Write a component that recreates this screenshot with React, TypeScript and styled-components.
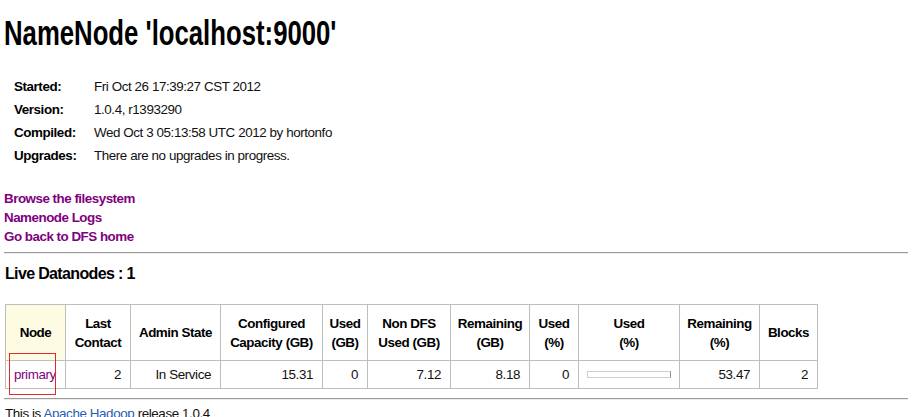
import React from "react";
import styled, { createGlobalStyle } from "styled-components";

const Global = createGlobalStyle`
  html, body { margin: 0; padding: 0; background: #fff; }
  body {
    font-family: "Liberation Sans", Arial, sans-serif;
    font-size: 13px;
    color: #111;
  }
`;

const Page = styled.div`
  width: 904px;
  padding: 0 0 0 4px;
`;

const Title = styled.h1`
  margin: 13px 0 0 0;
  font-size: 35px;
  line-height: 40px;
  font-weight: bold;
  color: #000;
  white-space: nowrap;
`;

const TitleText = styled.span`
  display: inline-block;
  transform: scaleX(0.735);
  transform-origin: left center;
`;

const InfoGrid = styled.div`
  margin: 22px 0 0 10px;
  display: grid;
  grid-template-columns: 80px auto;
  grid-auto-rows: 23px;
  align-items: center;
  font-size: 13.4px;
  letter-spacing: -0.42px;
  line-height: 15px;
`;

const InfoLabel = styled.div`
  font-weight: bold;
  color: #000;
`;

const InfoValue = styled.div`
  color: #111;
`;

const LinkList = styled.div`
  margin-top: 22px;
  display: flex;
  flex-direction: column;
`;

const NavLink = styled.a`
  display: block;
  font-weight: bold;
  font-size: 13.4px;
  line-height: 19px;
  color: #800080;
  text-decoration: none;
  letter-spacing: -0.5px;
`;

const Rule = styled.div<{ $top: number }>`
  margin-top: ${(p) => p.$top}px;
  border-top: 1px solid #9a9a9a;
  border-bottom: 1px solid #ececec;
`;

const Section = styled.h3`
  margin: 10px 0 0 1px;
  font-size: 16px;
  line-height: 19px;
  font-weight: bold;
  color: #000;
  letter-spacing: -0.65px;
`;

const Table = styled.table`
  margin: 21px 0 0 1px;
  border-collapse: collapse;
  table-layout: fixed;
  width: 812px;
  letter-spacing: -0.3px;
`;

const Th = styled.th<{ $sorted?: boolean }>`
  border: 1px solid #bdbdbd;
  height: 55px;
  padding: 0 5px;
  font-weight: bold;
  font-size: 13.4px;
  letter-spacing: -0.45px;
  text-align: center;
  line-height: 19px;
  color: #000;
  background: ${(p) => (p.$sorted ? "#fdfbe2" : "#fff")};
`;

const Td = styled.td<{ $align?: "left" | "right" | "center" }>`
  position: relative;
  border: 1px solid #bdbdbd;
  height: 27px;
  padding: 0 9px 0 8px;
  font-size: 13.4px;
  letter-spacing: -0.4px;
  text-align: ${(p) => p.$align ?? "right"};
  color: #111;
  line-height: 15px;
`;

const NodeLink = styled.a`
  color: #800080;
  text-decoration: none;
`;

const Annotation = styled.div`
  position: absolute;
  left: 3px;
  top: -8px;
  width: 45px;
  height: 40px;
  border: 1px solid #e3282c;
  pointer-events: none;
`;

const Bar = styled.div`
  width: 82px;
  height: 5px;
  border: 1px solid #cfcfcf;
  border-right-color: #8e8e8e;
  background: #fff;
`;

const Footer = styled.p`
  margin: 6px 0 0 1px;
  line-height: 15px;
  font-size: 13.4px;
  letter-spacing: -0.4px;
  color: #111;
`;

const FooterLink = styled.a`
  color: #2a5db0;
  text-decoration: none;
`;

const info: [string, string][] = [
  ["Started:", "Fri Oct 26 17:39:27 CST 2012"],
  ["Version:", "1.0.4, r1393290"],
  ["Compiled:", "Wed Oct 3 05:13:58 UTC 2012 by hortonfo"],
  ["Upgrades:", "There are no upgrades in progress."],
];

const cols = [60, 65, 90, 102, 45, 83, 79, 49, 101, 80, 58];

const headers: React.ReactNode[] = [
  "Node",
  <>Last<br />Contact</>,
  "Admin State",
  <>Configured<br />Capacity (GB)</>,
  <>Used<br />(GB)</>,
  <>Non DFS<br />Used (GB)</>,
  <>Remaining<br />(GB)</>,
  <>Used<br />(%)</>,
  <>Used<br />(%)</>,
  <>Remaining<br />(%)</>,
  "Blocks",
];

export default function App() {
  return (
    <Page>
      <Global />
      <Title>
        <TitleText>NameNode 'localhost:9000'</TitleText>
      </Title>
      <InfoGrid>
        {info.map(([k, v]) => (
          <React.Fragment key={k}>
            <InfoLabel>{k}</InfoLabel>
            <InfoValue>{v}</InfoValue>
          </React.Fragment>
        ))}
      </InfoGrid>
      <LinkList>
        <NavLink href="#">Browse the filesystem</NavLink>
        <NavLink href="#">Namenode Logs</NavLink>
        <NavLink href="#">Go back to DFS home</NavLink>
      </LinkList>
      <Rule $top={6} />
      <Section>Live Datanodes : 1</Section>
      <Table>
        <colgroup>
          {cols.map((w, i) => (
            <col key={i} style={{ width: w }} />
          ))}
        </colgroup>
        <thead>
          <tr>
            {headers.map((h, i) => (
              <Th key={i} $sorted={i === 0}>
                {h}
              </Th>
            ))}
          </tr>
        </thead>
        <tbody>
          <tr>
            <Td $align="left">
              <NodeLink href="#">primary</NodeLink>
              <Annotation />
            </Td>
            <Td>2</Td>
            <Td>In Service</Td>
            <Td>15.31</Td>
            <Td>0</Td>
            <Td>7.12</Td>
            <Td>8.18</Td>
            <Td>0</Td>
            <Td $align="left">
              <Bar />
            </Td>
            <Td>53.47</Td>
            <Td>2</Td>
          </tr>
        </tbody>
      </Table>
      <Rule $top={9} />
      <Footer>
        This is <FooterLink href="#">Apache Hadoop</FooterLink> release 1.0.4
      </Footer>
    </Page>
  );
}
